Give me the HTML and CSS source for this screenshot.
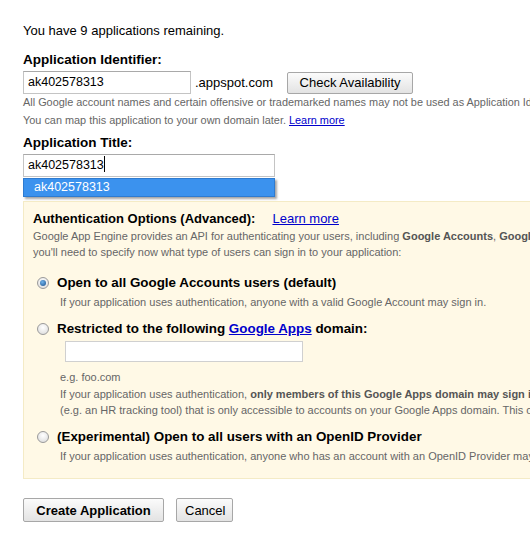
FILE: index.html
```html
<!DOCTYPE html>
<html lang="en">
<head>
    <meta charset="UTF-8">
    <title>Create an Application</title>
    <link rel="stylesheet" href="styles.css">
</head>
<body>
    <div class="page">
        <p class="remaining">You have 9 applications remaining.</p>

        <div class="field">
            <label class="field-label">Application Identifier:</label>
            <div class="id-row">
                <div class="text-input id-input">ak402578313</div>
                <span class="suffix">.appspot.com</span>
                <button class="btn check-btn" type="button">Check Availability</button>
            </div>
            <p class="hint">All Google account names and certain offensive or trademarked names may not be used as Application Identifiers.</p>
            <p class="hint">You can map this application to your own domain later. <a href="#">Learn more</a></p>
        </div>

        <div class="field">
            <label class="field-label">Application Title:</label>
            <div class="title-wrap">
                <div class="text-input title-input">ak402578313<span class="caret"></span></div>
                <div class="suggest">ak402578313</div>
            </div>
        </div>

        <div class="auth-box">
            <div class="auth-head">
                <span class="auth-title">Authentication Options (Advanced):</span>
                <a href="#">Learn more</a>
            </div>
            <p class="auth-desc">Google App Engine provides an API for authenticating your users, including <b>Google Accounts</b>, <b>Google Apps</b> and <b>OpenID</b>. If you choose to use this feature,<br>you'll need to specify now what type of users can sign in to your application:</p>

            <div class="option first">
                <div class="option-row">
                    <span class="radio checked"></span>
                    <span class="option-label">Open to all Google Accounts users (default)</span>
                </div>
                <p class="option-note">If your application uses authentication, anyone with a valid Google Account may sign in.</p>
            </div>

            <div class="option">
                <div class="option-row">
                    <span class="radio"></span>
                    <span class="option-label">Restricted to the following <a href="#">Google Apps</a> domain:</span>
                </div>
                <div class="domain-field">
                    <div class="text-input domain-input"></div>
                </div>
                <p class="example">e.g. foo.com</p>
                <p class="option-note">If your application uses authentication, <b>only members of this Google Apps domain may sign in</b>. This option is useful for apps<br>(e.g. an HR tracking tool) that is only accessible to accounts on your Google Apps domain. This option cannot be changed later.</p>
            </div>

            <div class="option">
                <div class="option-row">
                    <span class="radio"></span>
                    <span class="option-label">(Experimental) Open to all users with an OpenID Provider</span>
                </div>
                <p class="option-note">If your application uses authentication, anyone who has an account with an OpenID Provider may sign in.</p>
            </div>
        </div>

        <div class="actions">
            <button class="btn create-btn" type="button">Create Application</button>
            <button class="btn cancel-btn" type="button">Cancel</button>
        </div>
    </div>
</body>
</html>
```

FILE: styles.css
```css
* {
    margin: 0;
    padding: 0;
    box-sizing: border-box;
}

body {
    font-family: "Liberation Sans", Arial, sans-serif;
    font-size: 13px;
    color: #000;
    background: #fff;
    overflow: hidden;
}

.page {
    padding: 23px 0 0 23px;
    width: 760px;
}

a {
    color: #0000cc;
    text-decoration: underline;
}

.remaining {
    font-size: 13px;
    line-height: 16px;
    margin-bottom: 13px;
}

.field {
    margin-bottom: 6px;
}

.field-label {
    display: block;
    font-weight: bold;
    font-size: 13.5px;
    line-height: 16px;
    margin-bottom: 3px;
}

.id-row {
    display: flex;
    align-items: center;
    height: 23px;
    margin-bottom: -1px;
}

.text-input {
    height: 23px;
    border: 1px solid #c4c4c4;
    border-top-color: #a9a9a9;
    background: #fff;
    font-size: 12.5px;
    padding: 0 4px;
    line-height: 21px;
    color: #000;
    white-space: nowrap;
}

.id-input {
    width: 168px;
}

.suffix {
    margin-left: 4px;
    font-size: 13px;
}

.btn {
    font-family: inherit;
    font-size: 13px;
    height: 22px;
    padding: 0 8px;
    border: 1px solid #a7a7a7;
    border-radius: 2px;
    background: linear-gradient(#fbfbfb, #e3e3e3);
    color: #000;
    white-space: nowrap;
}

.check-btn {
    margin-left: 14px;
    width: 126px;
}

.hint {
    font-size: 10.9px;
    line-height: 18px;
    color: #666;
    white-space: nowrap;
}

.title-wrap {
    width: 252px;
}

.title-input {
    width: 252px;
}

.caret {
    display: inline-block;
    width: 1px;
    height: 16px;
    background: #000;
    vertical-align: -3px;
}

.suggest {
    height: 19px;
    margin-top: 1px;
    background: #3b92ee;
    border: 1px solid #2e7bd0;
    color: #fff;
    font-size: 12.5px;
    line-height: 17px;
    padding-left: 10px;
    box-shadow: 2px 2px 2px rgba(0, 0, 0, 0.35);
}

/* sits tight under the suggestion list */
.auth-box {
    margin-top: -2px;
    background: #fff9e6;
    border: 1px solid #f4ebc6;
    padding: 9px 0 14px 9px;
    width: 620px;
}

.auth-head {
    display: flex;
    align-items: baseline;
    gap: 17px;
    line-height: 16px;
}

.auth-title {
    font-weight: bold;
    font-size: 13px;
}

.auth-desc {
    font-size: 11px;
    line-height: 16px;
    color: #666;
    white-space: nowrap;
    margin-top: 1px;
}

.auth-desc b,
.option-note b {
    color: #555;
}

.option {
    margin-top: 10px;
}

.option.first {
    margin-top: 14px;
}

.option-row {
    display: flex;
    align-items: center;
    padding-left: 4px;
    line-height: 18px;
}

.radio {
    width: 12px;
    height: 12px;
    border-radius: 50%;
    border: 1px solid #9a9a9a;
    background: radial-gradient(circle at 50% 35%, #ffffff, #d9d9d9);
    margin-right: 8px;
    position: relative;
}

.radio.checked::after {
    content: "";
    position: absolute;
    left: 2px;
    top: 2px;
    width: 6px;
    height: 6px;
    border-radius: 50%;
    background: radial-gradient(circle at 40% 35%, #6fb3ec, #1a4f8a);
}

.option-label {
    font-weight: bold;
    font-size: 13.4px;
    white-space: nowrap;
}

.option-note {
    font-size: 11px;
    line-height: 16px;
    color: #666;
    padding-left: 27px;
    margin-top: 2px;
    white-space: nowrap;
}

.domain-field {
    padding-left: 32px;
    margin-top: 3px;
}

.domain-input {
    width: 238px;
    height: 21px;
    border-color: #d0d0d0;
}

.example {
    font-size: 11px;
    color: #666;
    line-height: 16px;
    padding-left: 27px;
    margin-top: 7px;
}

.example + .option-note {
    margin-top: 1px;
}

.actions {
    display: flex;
    gap: 12px;
    margin-top: 19px;
}

.actions .btn {
    height: 24px;
}

.create-btn {
    font-weight: bold;
    width: 141px;
}

.cancel-btn {
    width: 57px;
}
```
